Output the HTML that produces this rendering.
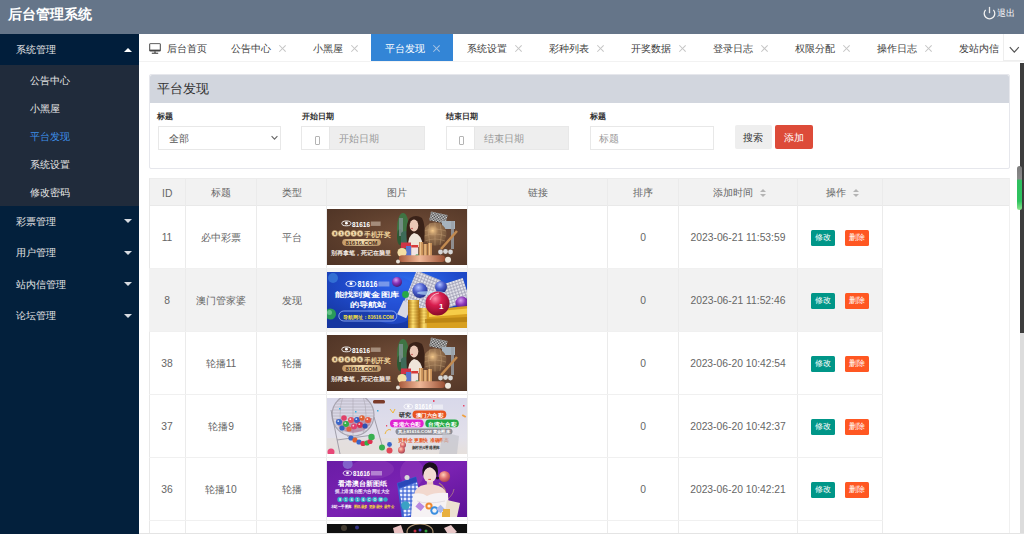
<!DOCTYPE html>
<html><head><meta charset="utf-8">
<style>
*{box-sizing:border-box;margin:0;padding:0}
html,body{width:1024px;height:534px;overflow:hidden;background:#fff;font-family:"Liberation Sans",sans-serif;color:#666}
.a{position:absolute}
#hd{left:0;top:0;width:1024px;height:34px;background:#657589}
#logo{left:7.5px;top:-0.5px;height:28px;line-height:28px;font-size:14px;font-weight:bold;color:#fff;white-space:nowrap}
#out{left:997px;top:3px;line-height:20px;font-size:8.8px;color:#fff}
#side{left:0;top:34px;width:139px;height:500px;background:#03203c}
.mi{position:absolute;left:0;width:139px;height:31.5px;line-height:31.5px;padding-left:16.3px;font-size:9.8px;color:#e6e6e6;white-space:nowrap}
.tri{position:absolute;left:124px;width:0;height:0;border-left:4px solid transparent;border-right:4px solid transparent}
.up{border-bottom:4.5px solid #fff}
.dn{border-top:4.5px solid #d8dce2}
#sub{left:0;top:65.4px;width:139px;height:140.6px;background:#202b3b}
.si{position:absolute;left:0;width:139px;height:28px;line-height:28px;padding-left:30.4px;font-size:9.8px;color:#e8e8e8;white-space:nowrap}
#tabs{left:139px;top:34px;width:885px;height:28px;background:#fff;border-bottom:1px solid #f2f2f2}
.tb{position:absolute;top:34px;height:27.4px;line-height:29px;font-size:9.8px;color:#404040;white-space:nowrap}
.x{position:absolute;top:11px;width:7px;height:7px}
.x:before,.x:after{content:"";position:absolute;left:3px;top:-0.8px;width:0.85px;height:9px;background:#c4c4c4;transform:rotate(45deg)}
.x:after{transform:rotate(-45deg)}
.act{background:#3385d6;color:#fff}
.act .x:before,.act .x:after{background:#a8c4e4}
#panel{left:149px;top:74px;width:861px;height:94.5px;border:1px solid #e6e7ec;border-radius:2px;background:#fff}
#ph{left:150px;top:75px;width:859px;height:28px;background:#d2d6de;border-radius:2px 2px 0 0}
#pt{left:157.3px;top:75px;line-height:29px;font-size:12.6px;color:#333}
.lb{position:absolute;top:111px;line-height:11px;font-size:8.4px;font-weight:bold;color:#333;white-space:nowrap}
.inp{position:absolute;top:126px;height:23.5px;border:1px solid #e8e8e8;background:#fff;font-size:9.8px;line-height:23px;color:#999;white-space:nowrap}
.dt{background:#eee}
.ib{position:absolute;left:0;top:0;width:28px;height:21.5px;background:#fff;border-right:1px solid #e6e6e6}
.ib:after{content:"";position:absolute;left:12.2px;top:8.6px;width:3.4px;height:7.6px;border:0.8px solid #b4b4b4;border-radius:1px}
.btn{position:absolute;top:125.2px;height:23.6px;line-height:25px;font-size:9.8px;text-align:center;border-radius:2px;white-space:nowrap}
#tbl{left:149px;top:178px;width:861px;height:355px;border-left:1px solid #e8e8e8;border-right:1px solid #f0f0f0;border-top:1px solid #ececec}
#thd{left:149px;top:178px;width:861px;height:28px;background:#f2f2f2;border-bottom:1px solid #e9e9e9}
.vl{position:absolute;top:179px;width:1px;height:355px;background:#ebebeb}
.hl{position:absolute;left:149px;width:734px;height:1px;background:#f0f0f0}
.th{position:absolute;top:180px;height:26.6px;line-height:26.6px;font-size:9.8px;color:#666;text-align:center;white-space:nowrap}
.td{position:absolute;height:62px;line-height:62px;font-size:9.8px;color:#666;text-align:center;white-space:nowrap}
.num{font-size:10.3px}
.n2{font-size:10.3px}
.sort{display:inline-block;position:relative;width:7px;height:8px;vertical-align:middle;margin-left:7px;top:0}
.sort:before{content:"";position:absolute;left:0;top:0;border-left:3.3px solid transparent;border-right:3.3px solid transparent;border-bottom:3px solid #b4b4b4}
.sort:after{content:"";position:absolute;left:0;top:5px;border-left:3.3px solid transparent;border-right:3.3px solid transparent;border-top:3px solid #b4b4b4}
.bt{position:absolute;width:24.3px;height:15.5px;line-height:15.5px;font-size:8.4px;color:#fff;text-align:center;border-radius:1.5px}
.img{position:absolute;left:327px;width:140px;height:56px;overflow:hidden}
#sb{left:1020px;top:63px;width:4px;height:270px;background:#3d3d3d}
#sb2{left:1020px;top:333px;width:4px;height:201px;background:#dcdcdc}
#bl{left:139px;top:533px;width:885px;height:1px;background:#e4e4e4}
#thumb{left:1017px;top:166px;width:5px;height:44px;border-radius:3px;background:linear-gradient(#7d7d7d 0,#8a8a8a 30%,#2fbf60 32%,#2ec35f 80%,#8ee58e 100%)}
#dd{left:1003px;top:34px;width:21px;height:27px;background:#fff;border-left:1px solid #eee;border-bottom:1px solid #eee}
</style></head><body>
<div id="hd" class="a"></div>
<div id="logo" class="a">后台管理系统</div>
<svg class="a" style="left:983.2px;top:6.2px" width="14" height="15" viewBox="0 0 14 15"><path d="M2.6 3.9A5.3 5.3 0 1 0 10.4 3.9" fill="none" stroke="#f0f0f0" stroke-width="1.3"/><line x1="6.5" y1="0.9" x2="6.5" y2="7.2" stroke="#e8e8e8" stroke-width="1.3"/></svg>
<div id="out" class="a">退出</div>

<div id="side" class="a"></div>
<div class="mi" style="top:34px;background:#011e3b">系统管理</div>
<div class="tri up" style="top:47.5px"></div>
<div id="sub" class="a"></div>
<div class="si" style="top:66.7px">公告中心</div>
<div class="si" style="top:94.7px">小黑屋</div>
<div class="si" style="top:122.7px;color:#3d8ee8">平台发现</div>
<div class="si" style="top:150.7px">系统设置</div>
<div class="si" style="top:178.7px">修改密码</div>
<div class="mi" style="top:205.5px">彩票管理</div>
<div class="tri dn" style="top:219px"></div>
<div class="mi" style="top:237px">用户管理</div>
<div class="tri dn" style="top:250.5px"></div>
<div class="mi" style="top:268.5px">站内信管理</div>
<div class="tri dn" style="top:282px"></div>
<div class="mi" style="top:300px">论坛管理</div>
<div class="tri dn" style="top:313.5px"></div>

<div id="tabs" class="a"></div>
<svg class="a" style="left:149px;top:43px" width="13" height="11" viewBox="0 0 13 11"><rect x="0.2" y="0.2" width="11.6" height="8.3" rx="1.3" fill="#444"/><rect x="1.2" y="1.1" width="9.6" height="5.5" fill="#fff"/><rect x="5.3" y="8.4" width="1.4" height="1.5" fill="#444"/><rect x="2.8" y="9.7" width="6.4" height="1.1" fill="#444"/></svg>
<div class="tb" style="left:167.3px">后台首页</div>
<div class="tb" style="left:231.4px">公告中心</div><div class="x" style="left:279px;top:45px"></div>
<div class="tb" style="left:312.8px">小黑屋</div><div class="x" style="left:351px;top:45px"></div>
<div class="tb act" style="left:371px;width:82px;padding-left:14px">平台发现<div class="x" style="left:62px;top:11px"></div></div>
<div class="tb" style="left:467.2px">系统设置</div><div class="x" style="left:515px;top:45px"></div>
<div class="tb" style="left:548.6px">彩种列表</div><div class="x" style="left:597px;top:45px"></div>
<div class="tb" style="left:630.7px">开奖数据</div><div class="x" style="left:679px;top:45px"></div>
<div class="tb" style="left:713.2px">登录日志</div><div class="x" style="left:761px;top:45px"></div>
<div class="tb" style="left:795.3px">权限分配</div><div class="x" style="left:842.5px;top:45px"></div>
<div class="tb" style="left:877px">操作日志</div><div class="x" style="left:924.6px;top:45px"></div>
<div class="tb" style="left:958.8px">发站内信</div>
<div id="dd" class="a"></div>
<svg class="a" style="left:1009px;top:46px" width="11" height="8" viewBox="0 0 11 8"><path d="M0.8 1.2L5.3 6.2L9.8 1.2" fill="none" stroke="#555" stroke-width="1.2"/></svg>

<div id="panel" class="a"></div>
<div id="ph" class="a"></div>
<div id="pt" class="a">平台发现</div>
<div class="lb" style="left:157.3px">标题</div>
<div class="inp" style="left:157.5px;width:123px;padding-left:10.3px;color:#555">全部</div>
<svg class="a" style="left:271px;top:135px" width="7" height="6" viewBox="0 0 7 6"><path d="M0.6 1.2L3.5 4.2L6.4 1.2" fill="none" stroke="#666" stroke-width="1.1"/></svg>
<div class="lb" style="left:301.7px">开始日期</div>
<div class="inp dt" style="left:301.4px;width:123.4px;padding-left:37px"><div class="ib"></div>开始日期</div>
<div class="lb" style="left:446px">结束日期</div>
<div class="inp dt" style="left:445.5px;width:123.1px;padding-left:37.2px"><div class="ib"></div>结束日期</div>
<div class="lb" style="left:590.25px">标题</div>
<div class="inp" style="left:590.3px;width:123.3px;padding-left:7.9px">标题</div>
<div class="btn" style="left:734.6px;width:37.7px;background:#eeeeee;color:#333">搜索</div>
<div class="btn" style="left:774.9px;width:37.7px;background:#dd4b39;color:#fff">添加</div>

<div id="thd" class="a"></div>
<div id="tbl" class="a"></div>
<div class="a" style="left:149px;top:268px;width:733px;height:63px;background:#f2f2f2"></div>
<div class="vl" style="left:185px"></div>
<div class="vl" style="left:256px"></div>
<div class="vl" style="left:326px"></div>
<div class="vl" style="left:467px"></div>
<div class="vl" style="left:607px"></div>
<div class="vl" style="left:678px"></div>
<div class="vl" style="left:797px"></div>
<div class="vl" style="left:882px"></div>
<div class="hl" style="top:268px"></div>
<div class="hl" style="top:331px"></div>
<div class="hl" style="top:394px"></div>
<div class="hl" style="top:457px"></div>
<div class="hl" style="top:520px"></div>

<div class="th num" style="left:149px;top:181px;width:36.5px">ID</div>
<div class="th" style="left:185.5px;width:71.1px">标题</div>
<div class="th" style="left:256.6px;width:70.3px">类型</div>
<div class="th" style="left:326.9px;width:140.6px">图片</div>
<div class="th" style="left:467.5px;width:140px">链接</div>
<div class="th" style="left:607.5px;width:70.7px">排序</div>
<div class="th" style="left:678px;width:119px;text-align:left;padding-left:35px">添加时间<span class="sort"></span></div>
<div class="th" style="left:797px;width:85px;text-align:left;padding-left:28.5px">操作<span class="sort"></span></div>

<svg width="0" height="0" style="position:absolute"><defs>
<radialGradient id="b1" cx="0.6" cy="0.45" r="0.8"><stop offset="0" stop-color="#75503a"/><stop offset="0.55" stop-color="#5e3f2d"/><stop offset="1" stop-color="#4e3325"/></radialGradient>
<linearGradient id="p1" x1="0" x2="1"><stop offset="0" stop-color="#c49a68"/><stop offset="0.5" stop-color="#f3ddb0"/><stop offset="1" stop-color="#c49a68"/></linearGradient>
<linearGradient id="ped" x1="0" x2="1"><stop offset="0" stop-color="#a85a3c"/><stop offset="0.45" stop-color="#f0b898"/><stop offset="1" stop-color="#9a5034"/></linearGradient>
<radialGradient id="cage1" cx="0.4" cy="0.35" r="0.7"><stop offset="0" stop-color="#f6c98a"/><stop offset="0.35" stop-color="#a07a55"/><stop offset="1" stop-color="#6e5038"/></radialGradient>
<linearGradient id="gold" x1="0" x2="1"><stop offset="0" stop-color="#9a6a2a"/><stop offset="0.5" stop-color="#e8b86a"/><stop offset="1" stop-color="#8a5a20"/></linearGradient>
<radialGradient id="b2" cx="0.55" cy="0.2" r="0.8"><stop offset="0" stop-color="#2f6ff0"/><stop offset="0.5" stop-color="#1f4bcc"/><stop offset="1" stop-color="#1636a0"/></radialGradient>
<radialGradient id="rball" cx="0.4" cy="0.3" r="0.7"><stop offset="0" stop-color="#ff8aa8"/><stop offset="0.4" stop-color="#d81e4e"/><stop offset="1" stop-color="#8a0a2a"/></radialGradient>
<radialGradient id="bball" cx="0.4" cy="0.3" r="0.7"><stop offset="0" stop-color="#b0c0ff"/><stop offset="0.5" stop-color="#4a5ccc"/><stop offset="1" stop-color="#23308a"/></radialGradient>
<radialGradient id="pball" cx="0.4" cy="0.3" r="0.7"><stop offset="0" stop-color="#d8a0f0"/><stop offset="0.5" stop-color="#8a34b8"/><stop offset="1" stop-color="#4a1a70"/></radialGradient>
<linearGradient id="coin" x1="0" x2="1"><stop offset="0" stop-color="#a87010"/><stop offset="0.45" stop-color="#ffe070"/><stop offset="1" stop-color="#b07818"/></linearGradient>
<linearGradient id="b3" x1="0" y1="0" x2="0" y2="1"><stop offset="0" stop-color="#d8d8ea"/><stop offset="0.7" stop-color="#e2e0ea"/><stop offset="1" stop-color="#e6e0dc"/></linearGradient>
<linearGradient id="b4" x1="0" y1="0" x2="1" y2="1"><stop offset="0" stop-color="#6a1ca6"/><stop offset="0.5" stop-color="#7a22b2"/><stop offset="1" stop-color="#5c1296"/></linearGradient>
<radialGradient id="pkball" cx="0.4" cy="0.35" r="0.7"><stop offset="0" stop-color="#ffd0b8"/><stop offset="0.5" stop-color="#e07070"/><stop offset="1" stop-color="#a04050"/></radialGradient>
<pattern id="chk" width="3" height="3" patternUnits="userSpaceOnUse"><rect width="3" height="3" fill="#e8e8e8"/><rect width="1.5" height="1.5" fill="#303030"/><rect x="1.5" y="1.5" width="1.5" height="1.5" fill="#303030"/></pattern>
<pattern id="grid" width="3" height="3" patternUnits="userSpaceOnUse"><rect width="3" height="3" fill="#a8a8bc"/><rect width="2.1" height="2.1" fill="#e2e2ea"/></pattern>
<pattern id="bgrid" width="4" height="4" patternUnits="userSpaceOnUse"><rect width="4" height="4" fill="#3a62d4"/><rect x="0.6" y="0.6" width="2.8" height="2.8" fill="#e8eeff"/></pattern>
<symbol id="img1" viewBox="0 0 140 56">
 <rect width="140" height="56" fill="url(#b1)"/>
 <ellipse cx="19.4" cy="14.4" rx="4.6" ry="2.4" fill="none" stroke="#fff" stroke-width="0.9"/><circle cx="19.4" cy="14.2" r="1.4" fill="#fff"/>
 <text x="25" y="17.6" font-family="Liberation Sans" font-weight="bold" font-size="7.8" fill="#fff" textLength="18" lengthAdjust="spacingAndGlyphs">81616</text>
 <rect x="43.8" y="12.5" width="9.8" height="4.4" fill="#d8c8b8" opacity="0.55"/>
 <g fill="#f1dcae" stroke="#b08a58" stroke-width="0.6"><circle cx="7.8" cy="24.4" r="3"/><circle cx="14.1" cy="24.4" r="3"/><circle cx="20.4" cy="24.4" r="3"/><circle cx="26.7" cy="24.4" r="3"/><circle cx="33" cy="24.4" r="3"/></g>
 <g font-family="Liberation Sans" font-weight="bold" font-size="4.2" fill="#5a3a20" text-anchor="middle"><text x="7.8" y="25.9">8</text><text x="14.1" y="25.9">1</text><text x="20.4" y="25.9">6</text><text x="26.7" y="25.9">1</text><text x="33" y="25.9">6</text></g>
 <text x="36.7" y="27.8" font-size="6.8" font-weight="bold" fill="#ecd09a" textLength="27.3" lengthAdjust="spacingAndGlyphs">手机开奖</text>
 <rect x="15.2" y="29.9" width="38.8" height="6.8" rx="3.4" fill="url(#p1)"/>
 <text x="18.5" y="35.5" font-family="Liberation Sans" font-weight="bold" font-size="5.6" fill="#4a2e1a" textLength="32" lengthAdjust="spacingAndGlyphs">81616.COM</text>
 <text x="4.2" y="45.8" font-size="6.2" font-weight="bold" fill="#f4ece4" textLength="59.8" lengthAdjust="spacingAndGlyphs">别再拿笔，死记在脑里</text>
 <ellipse cx="76" cy="19" rx="6" ry="15" fill="#3f7443"/><ellipse cx="73" cy="28" rx="3" ry="8" fill="#2d5a34"/>
 <rect x="72" y="9" width="4" height="18" fill="#8a98a0" opacity="0.7"/>
 <rect x="103" y="4" width="17" height="9" fill="url(#chk)" transform="rotate(12 111 8)"/>
 <rect x="115" y="12" width="13" height="8" fill="#a6b2bc"/>
 <rect x="124" y="12" width="3" height="28" fill="#9aa0a8" opacity="0.8"/>
 <circle cx="108" cy="25" r="11.5" fill="url(#cage1)"/>
 <g stroke="#c9a57a" stroke-width="0.5" fill="none" opacity="0.8"><path d="M97 22Q108 18 119 22M97 27Q108 23 119 27M98 32Q108 28 118 32"/><path d="M103 14Q100 25 103 36M108 13.5V36.5M113 14Q116 25 113 36"/></g>
 <path d="M114 40Q123 30 130 22" stroke="#c28a50" stroke-width="2.5" fill="none"/>
 <path d="M74 24Q78 20 82 24L82 40L74 40Z" fill="#3d6a58"/>
 <path d="M80 34Q78 14 83 9Q89 5 95 9Q99 16 97 33Z" fill="#3a2218"/>
 <ellipse cx="87" cy="16.5" rx="4.3" ry="6" fill="#eac8b6"/>
 <circle cx="85" cy="19.5" r="0.8" fill="#c04848"/>
 <path d="M81 38Q81 26 87 24Q95 25 96 38Z" fill="#efe5da"/>
 <g fill="#c89058"><rect x="92" y="33" width="4" height="15"/><rect x="96.5" y="35" width="4" height="13"/><rect x="101" y="34" width="4" height="14"/></g>
 <g fill="#ecc088"><rect x="93" y="33" width="1.2" height="15"/><rect x="97.5" y="35" width="1.2" height="13"/><rect x="102" y="34" width="1.2" height="14"/></g>
 <rect x="74" y="33.5" width="10" height="5.5" fill="#d03446"/>
 <rect x="79" y="37" width="5.2" height="11" fill="#5872cc"/>
 <rect x="84.2" y="36" width="7" height="12" fill="#f2e4e4"/><rect x="84.2" y="36" width="7" height="2.5" fill="#d83a3a"/>
 <circle cx="75" cy="43.5" r="4.6" fill="#f4dea4"/>
 <g fill="#d6d6d6"><circle cx="113.5" cy="43" r="2.4"/><circle cx="118.5" cy="42.5" r="2.4"/><circle cx="123.5" cy="43" r="2.4"/></g>
 <circle cx="90" cy="47" r="1.8" fill="#40a060"/>
 <rect x="72" y="46.3" width="46" height="6.8" rx="3" fill="url(#ped)"/>
 <circle cx="121" cy="50.8" r="3" fill="#eee8dc"/>
 <circle cx="71" cy="52.5" r="2" fill="#e6e0d6"/>
</symbol>
<symbol id="img2" viewBox="0 0 140 56">
 <rect width="140" height="56" fill="url(#b2)"/>
 <ellipse cx="66" cy="28" rx="28" ry="24" fill="#2a56e0" opacity="0.45"/>
 <circle cx="6" cy="6" r="5" fill="#4a9ae8" opacity="0.5"/>
 <circle cx="3.5" cy="42" r="5.5" fill="#2a9a5a"/><circle cx="2.5" cy="40.5" r="2.5" fill="#7ad09a" opacity="0.7"/>
 <ellipse cx="24" cy="11.8" rx="5" ry="2.6" fill="none" stroke="#fff" stroke-width="0.9"/><circle cx="24" cy="11.6" r="1.5" fill="#fff"/>
 <text x="30.4" y="14.8" font-family="Liberation Sans" font-weight="bold" font-size="8.2" fill="#fff" textLength="20" lengthAdjust="spacingAndGlyphs">81616</text>
 <rect x="51.4" y="9.5" width="11" height="5" fill="#b8c8f0" opacity="0.55"/>
 <text x="7.9" y="25.2" font-size="7.4" font-weight="bold" fill="#fff" textLength="64" lengthAdjust="spacingAndGlyphs">能找到黄金图库</text>
 <text x="22.5" y="34.6" font-size="7" font-weight="bold" fill="#fff" textLength="37" lengthAdjust="spacingAndGlyphs">的导航站</text>
 <rect x="11.8" y="39" width="58" height="10" rx="5" fill="#1a3aa0" fill-opacity="0.35" stroke="#9ab8ff" stroke-width="0.8"/>
 <text x="15.7" y="46.6" font-size="4.8" font-weight="bold" fill="#f8e040" textLength="51" lengthAdjust="spacingAndGlyphs">导航网址：81616.COM</text>
 <circle cx="70" cy="10" r="5" fill="url(#pball)"/>
 <rect x="82" y="2" width="26" height="36" fill="url(#grid)" transform="rotate(22 95 20)"/>
 <rect x="116" y="9" width="24" height="24" fill="url(#grid)" transform="rotate(-18 128 21)"/>
 <rect x="73" y="30" width="10" height="15" fill="#d8d8e4" transform="rotate(25 78 37)"/>
 <circle cx="93" cy="18.5" r="7.6" fill="url(#bball)"/>
 <circle cx="114" cy="15" r="6" fill="url(#bball)"/>
 <circle cx="78.5" cy="22.5" r="3.4" fill="#28a848"/>
 <ellipse cx="104" cy="21" rx="14" ry="2" fill="#c8f0ff" opacity="0.6"/>
 <circle cx="135" cy="31" r="6.5" fill="url(#pball)"/>
 <g fill="url(#coin)"><rect x="81" y="28" width="11" height="28"/><rect x="92" y="36" width="11" height="20"/></g>
 <g stroke="#8a5a08" stroke-width="0.35" opacity="0.6"><path d="M81 31H92M81 34H92M81 37H92M81 40H92M81 43H92M81 46H92M81 49H92M81 52H92M92 39H103M92 42H103M92 45H103M92 48H103M92 51H103"/></g>
 <path d="M100 38L140 34L140 56L100 56Z" fill="#d8a020"/>
 <path d="M102 40L140 36.5L140 42L102 45Z" fill="#f6cc48"/>
 <path d="M98 47L140 45L140 50L98 51Z" fill="#b07a10" opacity="0.7"/>
 <circle cx="110.5" cy="31.5" r="12" fill="url(#rball)"/>
 <path d="M103 28Q105 22 112 21" stroke="#fff" stroke-width="0.8" fill="none" opacity="0.8"/>
 <text x="112" y="37" font-family="Liberation Sans" font-weight="bold" font-size="8" fill="#fff">1</text>
</symbol>
<symbol id="img3" viewBox="0 0 140 56">
 <rect width="140" height="56" fill="url(#b3)"/>
 <rect x="0" y="40" width="70" height="16" fill="#e4dedc" opacity="0.7"/>
 <circle cx="26" cy="17" r="21" fill="#d4d0dc" fill-opacity="0.4" stroke="#a8a4b0" stroke-width="1.2"/>
 <g stroke="#a6a2ac" stroke-width="0.5" fill="none"><path d="M13.7 0H38.3M10.3 3H41.7M8.1 6H43.9M6.6 9H45.4M5.6 12H46.4M5.1 15H46.9M5.0 18H47.0M5.4 21H46.6M6.2 24H45.8M7.5 27H44.5M9.5 30H42.5M12.4 33H39.6"/><path d="M26 -4V38M16 -2Q10 17 16 36M36 -2Q42 17 36 36"/></g>
 <path d="M9 21Q26 26 45 20Q44 33 26 35Q10 33 9 21Z" fill="#a86a88" opacity="0.55"/>
 <g><circle cx="12" cy="24" r="3" fill="#3a66c8"/><circle cx="17" cy="20" r="2.8" fill="#e04068"/><circle cx="19" cy="26" r="3" fill="#30b048"/><circle cx="24" cy="22" r="3" fill="#e85060"/><circle cx="30" cy="22" r="3" fill="#3a5ac0"/><circle cx="35" cy="20" r="2.8" fill="#e06030"/><circle cx="41" cy="22" r="3" fill="#e85a40"/><circle cx="27" cy="28.5" r="3" fill="#e04070"/><circle cx="33" cy="27" r="3" fill="#d83050"/><circle cx="15" cy="30" r="2.6" fill="#3060c0"/><circle cx="22" cy="31" r="2.6" fill="#e06040"/><circle cx="38" cy="28" r="2.6" fill="#3050b0"/></g>
 <g fill="#fff" opacity="0.75"><circle cx="11.3" cy="23.2" r="0.9"/><circle cx="23.3" cy="21.2" r="0.9"/><circle cx="29.3" cy="21.2" r="0.9"/><circle cx="18.3" cy="25.2" r="0.9"/><circle cx="34.3" cy="19.2" r="0.9"/><circle cx="40.3" cy="21.2" r="0.9"/><circle cx="26.3" cy="27.7" r="0.9"/><circle cx="32.3" cy="26.2" r="0.9"/></g>
 <rect x="46" y="2" width="12" height="3.4" rx="1.5" fill="#7a3a2a"/>
 <g stroke="#9a96a2" stroke-width="0.9"><path d="M4 12L13 56M47 19L55 47M10 42L46 37"/></g>
 <path d="M20 38Q35 48 48 40" stroke="#a8a4b0" stroke-width="0.8" fill="none"/>
 <g><circle cx="24" cy="40" r="2.6" fill="#3a66c8"/><circle cx="28" cy="42" r="2.6" fill="#e06030"/><circle cx="32" cy="44" r="2.6" fill="#3a66c8"/><circle cx="36" cy="45.5" r="2.6" fill="#e03050"/><circle cx="40" cy="45" r="2.6" fill="#30b048"/><circle cx="43" cy="43.5" r="2.6" fill="#e03050"/><circle cx="44.5" cy="39" r="3.2" fill="#38b050"/></g>
 <circle cx="55" cy="49.5" r="3" fill="#38b050"/><circle cx="62.5" cy="46.5" r="2.4" fill="#3a66c8"/><circle cx="62.5" cy="52.5" r="3" fill="#e04858"/>
 <circle cx="4" cy="54" r="3.5" fill="#e84878"/>
 <path d="M63 11L66 15L68 11M58 36Q60 30 64 32" stroke="#f0b020" stroke-width="0.9" fill="none"/>
 <ellipse cx="81.3" cy="8.5" rx="4.3" ry="2.3" fill="none" stroke="#fff" stroke-width="0.8"/><circle cx="81.3" cy="8.4" r="1.3" fill="#fff"/>
 <text x="87.8" y="11.2" font-family="Liberation Sans" font-weight="bold" font-size="6.6" fill="#fff" textLength="17" lengthAdjust="spacingAndGlyphs">81616</text>
 <rect x="106" y="6.5" width="10" height="4.5" fill="#fff" opacity="0.45"/>
 <text x="72" y="19.4" font-size="5.8" font-weight="bold" fill="#222" textLength="12" lengthAdjust="spacingAndGlyphs">研究</text>
 <rect x="85.5" y="12.6" width="33.8" height="7.8" rx="3.9" fill="#e85420"/>
 <text x="88.5" y="18.8" font-size="5.4" font-weight="bold" fill="#fff" textLength="28" lengthAdjust="spacingAndGlyphs">澳门六合彩</text>
 <rect x="63" y="21.5" width="33.7" height="7.8" rx="3.9" fill="#e022d0"/>
 <text x="66" y="27.7" font-size="5.4" font-weight="bold" fill="#fff" textLength="28" lengthAdjust="spacingAndGlyphs">香港六合彩</text>
 <rect x="98.3" y="21.5" width="33.5" height="7.8" rx="3.9" fill="#22a844"/>
 <text x="101.3" y="27.7" font-size="5.4" font-weight="bold" fill="#fff" textLength="28" lengthAdjust="spacingAndGlyphs">台湾六合彩</text>
 <rect x="68.5" y="30.4" width="57" height="6.3" rx="3.1" fill="#8c8c94"/>
 <text x="71" y="35.4" font-size="4.4" font-weight="bold" fill="#fff" textLength="52" lengthAdjust="spacingAndGlyphs">真上81616.COM 黄金图库</text>
 <text x="71" y="43.6" font-size="5" font-weight="bold" fill="#e8581e" textLength="51" lengthAdjust="spacingAndGlyphs">资料全 更新快 准确率高</text>
 <text x="84.7" y="50.5" font-size="4.2" font-weight="bold" fill="#333" textLength="28.3" lengthAdjust="spacingAndGlyphs">新村的6香港图库</text>
 <path d="M112 56L116 34L132 38L130 56Z" fill="#c4c4cc" opacity="0.7"/>
 <circle cx="76" cy="47" r="3" fill="url(#pkball)"/><circle cx="74.5" cy="52" r="3.5" fill="url(#pkball)"/>
 <g fill="#3ab0e0"><rect x="12" y="10" width="1.5" height="1.5"/><rect x="28" y="13" width="1.5" height="1.5"/><rect x="50" y="12" width="1.5" height="1.5"/></g>
 <g fill="#e84a6a"><rect x="59" y="27" width="1.2" height="1.5"/><rect x="136" y="7" width="1.5" height="1.5"/><rect x="106" y="2" width="1.5" height="2"/></g>
 <rect x="135" y="17" width="4" height="2" fill="#f0a040" transform="rotate(30 137 18)"/>
</symbol>
<symbol id="img4" viewBox="0 0 140 56">
 <rect width="140" height="56" fill="url(#b4)"/>
 <ellipse cx="45" cy="8" rx="22" ry="10" fill="#9040b8" opacity="0.45"/>
 <ellipse cx="85" cy="12" rx="12" ry="14" fill="#a24ac4" opacity="0.35"/>
 <circle cx="20.7" cy="3" r="5" fill="#8a80d8" opacity="0.7"/>
 <ellipse cx="20.5" cy="12.2" rx="4.3" ry="2.2" fill="none" stroke="#fff" stroke-width="0.8"/><circle cx="20.5" cy="12" r="1.3" fill="#fff"/>
 <text x="26" y="15" font-family="Liberation Sans" font-weight="bold" font-size="7" fill="#fff" textLength="17" lengthAdjust="spacingAndGlyphs">81616</text>
 <rect x="44" y="10" width="11" height="4.5" fill="#fff" opacity="0.4"/>
 <text x="11" y="25.2" font-size="7" font-weight="bold" fill="#fff" textLength="49.3" lengthAdjust="spacingAndGlyphs">看港澳台新图纸</text>
 <text x="8.4" y="32" font-size="4.6" font-weight="bold" fill="#f4ecff" textLength="54.5" lengthAdjust="spacingAndGlyphs">掘上港澳台图六合网址大全</text>
 <g fill="#36a6c6"><circle cx="13" cy="38.5" r="2.7"/><circle cx="18.8" cy="38.5" r="2.7"/><circle cx="24.6" cy="38.5" r="2.7"/><circle cx="30.4" cy="38.5" r="2.7"/><circle cx="36.2" cy="38.5" r="2.7"/><circle cx="42" cy="38.5" r="2.7"/><circle cx="47.8" cy="38.5" r="2.7"/><circle cx="53.6" cy="38.5" r="2.7"/><circle cx="58.5" cy="38.5" r="2.3"/></g><g fill="#fff" font-family="Liberation Sans" font-size="3.4" font-weight="bold" text-anchor="middle"><text x="13" y="39.7">8</text><text x="18.8" y="39.7">1</text><text x="24.6" y="39.7">6</text><text x="30.4" y="39.7">1</text><text x="36.2" y="39.7">6</text><text x="42" y="39.7">C</text><text x="47.8" y="39.7">O</text><text x="53.6" y="39.7">M</text></g>
 <text x="3.5" y="47.4" font-size="4.2" font-weight="bold" fill="#fff" textLength="21" lengthAdjust="spacingAndGlyphs">本站一手图库</text>
 <text x="27" y="47.4" font-size="4.2" font-weight="bold" fill="#f8d838" textLength="40" lengthAdjust="spacingAndGlyphs">图纸最多 更新最快 最齐全</text>
 <path d="M112 50A14 16 0 0 0 112 22" fill="none" stroke="#b89070" stroke-width="1.3" opacity="0.85"/>
 <path d="M115 42Q126 36 127 28" stroke="#c8a080" stroke-width="0.6" fill="none"/>
 <circle cx="117.5" cy="15.5" r="5.6" fill="url(#pkball)"/>
 <path d="M70 22L89 15.5L97.5 52L75 58Z" fill="#3a5ed0"/>
 <path d="M72 28L90 21.5L96.5 50L77 56Z" fill="url(#bgrid)"/>
 <path d="M70.5 22.5L89 16L90 20.5L72 27Z" fill="#2a48b8"/>
 <circle cx="80" cy="16.5" r="2.5" fill="#d8d8d8"/>
 <path d="M100 20L106 20L106.5 27L99.5 27Z" fill="#ecc8bc"/>
 <path d="M87 34Q88 25 99 23.5L106 23.5Q118 25 119.5 33L119.5 38L87 38Z" fill="#f2d8ce"/>
 <path d="M86 33Q95 31 100 35Q108 31 121 32L122 56L84 56Z" fill="#f6f2f4"/>
 <path d="M90 40Q100 44 118 40" stroke="#e0d8e0" stroke-width="0.8" fill="none"/>
 <ellipse cx="102.8" cy="13.8" rx="6.6" ry="7.6" fill="#f2dad2"/>
 <path d="M95.5 14Q94 3 102 1.2Q111 1 111 10Q111 14 110 16Q109 8 103 6Q97 7 96 15Z" fill="#1a0e1c"/>
 <circle cx="110.5" cy="17" r="1.6" fill="#1a0e1c"/>
 <path d="M101.3 18.4H104" stroke="#d84040" stroke-width="0.9"/>
 <circle cx="78.5" cy="44.5" r="4.2" fill="#3aa2c4"/>
 <rect x="89.5" y="42.5" width="7" height="6" fill="#b888e0" transform="rotate(40 93 45.5)"/>
 <circle cx="102" cy="45" r="3.6" fill="#f08a30"/><circle cx="102" cy="45" r="1.6" fill="#fff4e0"/>
 <circle cx="107.5" cy="49.5" r="4.2" fill="#3a8ee0"/><circle cx="107.5" cy="49.5" r="2.2" fill="#f4f4f4"/>
 <rect x="110.5" y="45" width="6" height="6" fill="#a8b8ec" transform="rotate(45 113.5 48)"/>
 <path d="M120 39L133 42L130 56L117 56Z" fill="#ece0d2"/>
 <g fill="#e8b040"><rect x="116" y="48" width="7" height="3"/><rect x="115" y="51" width="8" height="5"/></g>
</symbol>
<symbol id="img5" viewBox="0 0 140 56">
 <rect width="140" height="56" fill="#101010"/>
 <circle cx="17" cy="4" r="3" fill="#5a5040" opacity="0.7"/>
 <circle cx="30" cy="3.5" r="2" fill="#4040a0" opacity="0.8"/>
 <path d="M66 4L74 1L77 10L68 12Z" fill="#e8c0c0"/>
 <ellipse cx="93" cy="8" rx="13" ry="8" fill="none" stroke="#a89070" stroke-width="1.2"/>
 <g fill="#c03040"><circle cx="88" cy="7" r="1.5"/></g><g fill="#5040c0"><circle cx="93" cy="6" r="1.5"/></g><g fill="#30a040"><circle cx="99" cy="7" r="1.5"/></g>
 <path d="M117 4L124 1L130 8L122 12Z" fill="#e8c8c8"/>
</symbol>
</defs></svg>
<!-- ROWS -->
<div class="td num" style="left:149px;top:207px;width:36px">11</div>
<div class="td" style="left:185px;top:207px;width:72px">必中彩票</div>
<div class="td" style="left:256px;top:207px;width:71px">平台</div>
<div class="td num" style="left:607px;top:207px;width:72px">0</div>
<div class="td num" style="left:678px;top:207px;width:120px">2023-06-21 11:53:59</div>
<div class="bt" style="left:811.1px;top:230.3px;background:#009688">修改</div>
<div class="bt" style="left:845px;top:230.3px;background:#ff5722">删除</div>
<svg class="img" style="top:209px" viewBox="0 0 140 56"><use href="#img1"/></svg>
<div class="td num" style="left:149px;top:270px;width:36px">8</div>
<div class="td" style="left:185px;top:270px;width:72px">澳门管家婆</div>
<div class="td" style="left:256px;top:270px;width:71px">发现</div>
<div class="td num" style="left:607px;top:270px;width:72px">0</div>
<div class="td num" style="left:678px;top:270px;width:120px">2023-06-21 11:52:46</div>
<div class="bt" style="left:811.1px;top:293.3px;background:#009688">修改</div>
<div class="bt" style="left:845px;top:293.3px;background:#ff5722">删除</div>
<svg class="img" style="top:272px" viewBox="0 0 140 56"><use href="#img2"/></svg>
<div class="td num" style="left:149px;top:333px;width:36px">38</div>
<div class="td" style="left:185px;top:333px;width:72px">轮播<span class="n2">11</span></div>
<div class="td" style="left:256px;top:333px;width:71px">轮播</div>
<div class="td num" style="left:607px;top:333px;width:72px">0</div>
<div class="td num" style="left:678px;top:333px;width:120px">2023-06-20 10:42:54</div>
<div class="bt" style="left:811.1px;top:356.3px;background:#009688">修改</div>
<div class="bt" style="left:845px;top:356.3px;background:#ff5722">删除</div>
<svg class="img" style="top:335px" viewBox="0 0 140 56"><use href="#img1"/></svg>
<div class="td num" style="left:149px;top:396px;width:36px">37</div>
<div class="td" style="left:185px;top:396px;width:72px">轮播<span class="n2">9</span></div>
<div class="td" style="left:256px;top:396px;width:71px">轮播</div>
<div class="td num" style="left:607px;top:396px;width:72px">0</div>
<div class="td num" style="left:678px;top:396px;width:120px">2023-06-20 10:42:37</div>
<div class="bt" style="left:811.1px;top:419.3px;background:#009688">修改</div>
<div class="bt" style="left:845px;top:419.3px;background:#ff5722">删除</div>
<svg class="img" style="top:398px" viewBox="0 0 140 56"><use href="#img3"/></svg>
<div class="td num" style="left:149px;top:459px;width:36px">36</div>
<div class="td" style="left:185px;top:459px;width:72px">轮播<span class="n2">10</span></div>
<div class="td" style="left:256px;top:459px;width:71px">轮播</div>
<div class="td num" style="left:607px;top:459px;width:72px">0</div>
<div class="td num" style="left:678px;top:459px;width:120px">2023-06-20 10:42:21</div>
<div class="bt" style="left:811.1px;top:482.3px;background:#009688">修改</div>
<div class="bt" style="left:845px;top:482.3px;background:#ff5722">删除</div>
<svg class="img" style="top:461px" viewBox="0 0 140 56"><use href="#img4"/></svg>
<svg class="img" style="top:524px" viewBox="0 0 140 56"><use href="#img5"/></svg>
<div id="sb" class="a"></div>
<div id="sb2" class="a"></div>
<div id="bl" class="a"></div>
<div id="thumb" class="a"></div>
</body></html>
